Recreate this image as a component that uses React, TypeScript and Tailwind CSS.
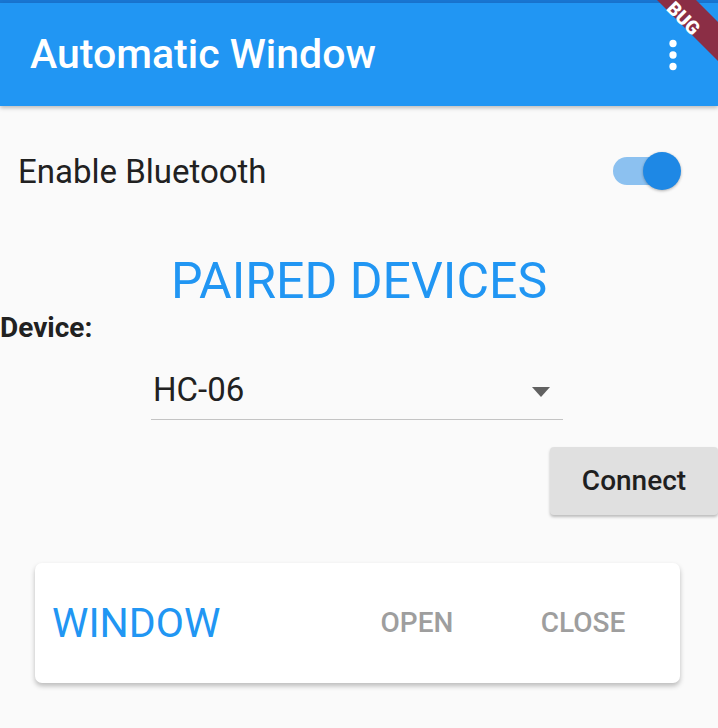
import React from "react";

function DebugBanner() {
  return (
    <svg className="absolute top-0 right-0 z-20" width="80" height="80" viewBox="0 0 80 80">
      <polygon points="19,0 58,0 80,22 80,61" fill="#8b2e45" />
      <g transform="translate(32,5) rotate(45)">
        <text
          x="0"
          y="0"
          textAnchor="start"
          dominantBaseline="central"
          fill="#ffffff"
          fontFamily="Roboto, sans-serif"
          fontWeight="900"
          fontSize="19"
        >
          BUG
        </text>
      </g>
    </svg>
  );
}

export default function App() {
  return (
    <div className="relative w-[718px] h-[728px] overflow-hidden bg-[#fafafa] [font-family:Roboto,sans-serif]">
      <div className="h-[3px] bg-[#1976d2]" />
      <div className="relative z-10 flex h-[103px] items-center justify-between bg-[#2196f3] pl-[30px] pr-[22px] shadow-[0_2px_4px_rgba(0,0,0,0.25)]">
        <span className="text-[41px] leading-none font-medium text-white">Automatic Window</span>
        <svg width="46" height="46" viewBox="0 0 24 24" fill="#ffffff">
          <circle cx="12" cy="6" r="1.9" />
          <circle cx="12" cy="12" r="1.9" />
          <circle cx="12" cy="18" r="1.9" />
        </svg>
      </div>

      <div className="mt-[46px] flex h-[38px] items-center justify-between pl-[18px] pr-[37px]">
        <span className="text-[33px] leading-none text-[#212121]">Enable Bluetooth</span>
        <div className="relative flex h-[38px] w-[68px] items-center">
          <div className="h-[28px] w-[62px] rounded-full bg-[#8cc1f0]" />
          <div className="absolute right-0 top-0 h-[38px] w-[38px] rounded-full bg-[#1e88e5] shadow-[0_1px_3px_rgba(0,0,0,0.3)]" />
        </div>
      </div>

      <div className="mt-[66px] text-center text-[50px] leading-none text-[#2196f3]">PAIRED DEVICES</div>

      <div className="mt-[8px] text-[28px] leading-none font-bold text-[#212121]">Device:</div>

      <div className="ml-[151px] mt-[31px] w-[412px] border-b-[1.5px] border-[#c4c4c4] pb-[13px]">
        <div className="flex items-center justify-between pl-[2px] pr-[13px]">
          <span className="text-[33px] leading-none text-[#212121]">HC-06</span>
          <svg width="18" height="10" viewBox="0 0 18 10" className="mt-[4px]">
            <polygon points="0,0 18,0 9,10" fill="#616161" />
          </svg>
        </div>
      </div>

      <div className="mt-[27px] flex justify-end">
        <div className="flex h-[68px] w-[168px] items-center justify-center rounded-[4px] bg-[#e0e0e0] shadow-[0_2px_3px_rgba(0,0,0,0.25)]">
          <span className="text-[28px] leading-none font-medium text-[#1f1f1f]">Connect</span>
        </div>
      </div>

      <div className="ml-[35px] mt-[48px] flex h-[120px] w-[645px] items-center rounded-[7px] bg-white pl-[17px] pr-[14px] shadow-[0_3px_5px_rgba(0,0,0,0.25)]">
        <span className="text-[41px] leading-none text-[#2196f3]">WINDOW</span>
        <div className="ml-auto flex">
          <span className="w-[166px] text-center text-[28px] leading-none font-medium text-[#9e9e9e]">OPEN</span>
          <span className="w-[166px] text-center text-[28px] leading-none font-medium text-[#9e9e9e]">CLOSE</span>
        </div>
      </div>

      <DebugBanner />
    </div>
  );
}
